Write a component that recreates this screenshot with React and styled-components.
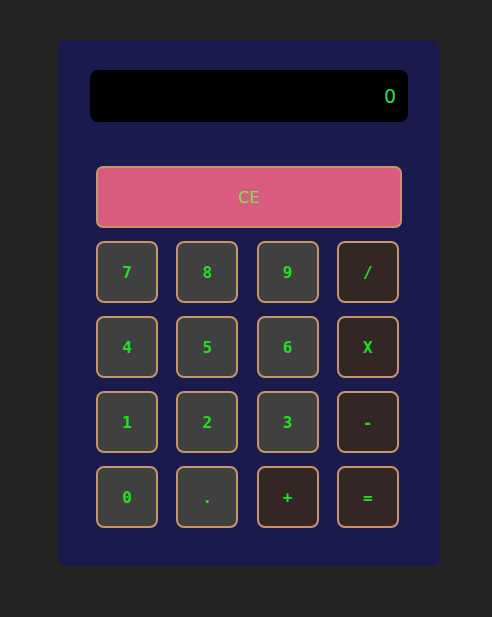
import React from 'react';
import styled, { createGlobalStyle } from 'styled-components';

const GlobalStyle = createGlobalStyle`
  html, body {
    margin: 0;
    background-color: #242424;
  }
  body {
    padding: 40px 0 0 58px;
  }
`;

const keys = [
  ['7', '8', '9', '/'],
  ['4', '5', '6', 'X'],
  ['1', '2', '3', '-'],
  ['0', '.', '+', '='],
];

const isOperator = (k) => ['/', 'X', '-', '+', '='].includes(k);

const App = () => (
  <>
    <GlobalStyle />
    <Calculator>
      <Display>0</Display>
      <Keypad>
        <ClearButton type="button">CE</ClearButton>
        {keys.map((row) => (
          <KeyRow key={row.join('')}>
            {row.map((k) => (
              <Key key={k} type="button" operator={isOperator(k)}>
                {k}
              </Key>
            ))}
          </KeyRow>
        ))}
      </Keypad>
    </Calculator>
  </>
);

const Calculator = styled.div`
  width: 382px;
  height: 526px;
  box-sizing: border-box;
  padding: 30px 32px 0;
  background-color: #1b1a4c;
  border-radius: 8px;
`;

const Display = styled.div`
  height: 52px;
  box-sizing: border-box;
  padding: 0 12px;
  display: flex;
  align-items: center;
  justify-content: flex-end;
  background-color: #000;
  border-radius: 8px;
  color: #2ee62e;
  font-family: 'DejaVu Sans', sans-serif;
  font-size: 19px;
`;

const Keypad = styled.div`
  margin: 44px 6px 0;
  display: flex;
  flex-direction: column;
  gap: 13px;
`;

const ClearButton = styled.button`
  width: 306px;
  height: 62px;
  padding: 0;
  background-color: #d95b7e;
  border: 2px solid #c8946a;
  border-radius: 7px;
  color: #7ee05a;
  font-family: 'DejaVu Sans', sans-serif;
  font-size: 16px;
`;

const KeyRow = styled.div`
  display: flex;
  gap: 18.3px;
`;

const Key = styled.button`
  width: 62px;
  height: 62px;
  padding: 0;
  background-color: ${(p) => (p.operator ? '#352626' : '#404040')};
  border: 2px solid #c8946a;
  border-radius: 8px;
  color: #22dd22;
  font-family: 'DejaVu Sans Mono', monospace;
  font-size: 16px;
  font-weight: bold;
`;

export default App;
